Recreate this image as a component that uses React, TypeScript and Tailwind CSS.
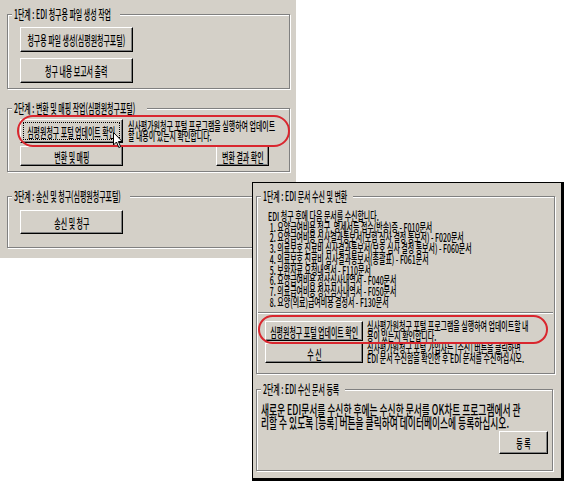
import React from 'react';

const FACE = "font-['Noto_Sans_CJK_KR','Noto_Sans',sans-serif] font-medium";

// text in the original is a narrow bitmap face, so we squeeze it horizontally
function Line({ children, className = '' }: { children: React.ReactNode; className?: string }) {
  return <span className={`block w-max origin-left scale-x-[0.58] whitespace-nowrap ${className}`}>{children}</span>;
}

function Btn({
  children,
  className = '',
  focus = false,
}: {
  children: React.ReactNode;
  className?: string;
  focus?: boolean;
}) {
  return (
    <div
      className={`relative flex shrink-0 items-center justify-center border border-t-white border-l-white border-r-black border-b-black bg-[#d4d0c8] shadow-[inset_-1px_-1px_0_#808080] ${className}`}
    >
      {focus && <div className="absolute inset-[2px] border border-dotted border-black" />}
      <span className="inline-block scale-x-[0.535] whitespace-nowrap text-[13px] leading-[13px]">{children}</span>
    </div>
  );
}

function Group({
  label,
  labelW,
  className = '',
  children,
}: {
  label: string;
  labelW: string;
  className?: string;
  children?: React.ReactNode;
}) {
  return (
    <div className={`relative border border-[#808080] shadow-[inset_1px_1px_0_#fff,1px_1px_0_#fff] ${className}`}>
      <span className={`absolute -top-[7px] left-[4px] h-[12px] bg-[#d4d0c8] px-[2px] ${labelW}`}>
        <Line className="-mt-[1px] scale-x-[0.535] text-[13px] leading-[13px]">{label}</Line>
      </span>
      {children}
    </div>
  );
}

const docs = [
  '1. 요양급여비용 청구, 명세서등 접수(반송)증 - F010문서',
  '2. 요양급여비용 심사결과통보서(보험 심사 결정 통보서) - F020문서',
  '3. 의료보호 진료비 심사결과통보서(보호 심사 결정 통보서) - F060문서',
  '4. 의료보호 진료비 심사결과통보서(총괄표) - F061문서',
  '5. 보완자료 요청내역서 - F110문서',
  '6. 요양급여비용 정산심사내역서 - F040문서',
  '7. 의료급여비용 정산심사내역서 - F050문서',
  '8. 요양(의료)급여비용 결정서 - F130문서',
];

export default function App() {
  return (
    <div className={`relative h-[481px] w-[564px] overflow-hidden bg-white text-black ${FACE}`}>
      {/* left window: claim steps */}
      <div className="h-[258px] w-[296px] bg-[#d4d0c8] pl-[7px] pr-[6px] pt-[14px]">
        <Group label="1단계 : EDI 청구용 파일 생성 작업" labelW="w-[108px]" className="h-[75px] pl-[12px] pt-[12px]">
          <div className="flex flex-col gap-[6px]">
            <Btn className="h-[25px] w-[113px]">청구용 파일 생성(심평원청구포털)</Btn>
            <Btn className="h-[25px] w-[113px]">청구 내용 보고서 출력</Btn>
          </div>
        </Group>

        <Group
          label="2단계 : 변환 및 매핑 작업(심평원청구포털)"
          labelW="w-[135px]"
          className="mt-[19px] h-[64px] pl-[12px] pr-[20px] pt-[10px]"
        >
          <div className="flex items-start gap-[5px]">
            <Btn focus className="h-[24px] w-[103px]">심평원청구 포털 업데이트 확인</Btn>
            <div className="pt-[2px] text-[12px] leading-[10px]">
              <Line>심사평가원청구 포털 프로그램을 실행하여 업데이트</Line>
              <Line>할 내용이 있는지 확인합니다.</Line>
            </div>
          </div>
          <div className="mt-[3px] flex justify-between">
            <Btn className="h-[20px] w-[103px]">변환 및 매핑</Btn>
            <Btn className="h-[20px] w-[53px]">변환 결과 확인</Btn>
          </div>
        </Group>

        <Group
          label="3단계 : 송신 및 청구(심평원청구포털)"
          labelW="w-[118px]"
          className="mt-[24px] h-[52px] pl-[12px] pt-[13px]"
        >
          <Btn className="h-[24px] w-[103px]">송신 및 청구</Btn>
        </Group>
      </div>

      {/* right window: receive steps, laid over the left one */}
      <div className="absolute left-[252px] top-[182px] h-[299px] w-[312px] border-t border-l border-r-[3px] border-b-[3px] border-black bg-[#d4d0c8] pl-[3px] pr-[3px] pt-[13px]">
        <Group label="1단계 : EDI 문서 수신 및 변환" labelW="w-[92px]" className="h-[178px] w-[299px] pt-[14px]">
          <div className="pl-[11px] text-[12px] leading-[10.7px]">
            <Line>EDI 청구 후에 다음 문서를 수신합니다.</Line>
            {docs.map((d) => (
              <Line key={d} className="pl-[3px]">
                {d}
              </Line>
            ))}
          </div>
          <div className="mx-[1px] mt-[5px] h-[2px] border-t border-b border-t-[#808080] border-b-white" />
          <div className="flex flex-col gap-[2px] pl-[8px] pt-[7px]">
            <div className="flex items-start gap-[4px]">
              <Btn className="h-[20px] w-[98px]">심평원청구 포털 업데이트 확인</Btn>
              <div className="text-[12px] leading-[10px]">
                <Line>심사평가원청구 포털 프로그램을 실행하여 업데이트할 내</Line>
                <Line>용이 있는지 확인합니다.</Line>
              </div>
            </div>
            <div className="flex items-start gap-[4px]">
              <Btn className="h-[20px] w-[98px]">수 신</Btn>
              <div className="text-[12px] leading-[10px]">
                <Line>심사평가원청구 포털 가입자는 [수신] 버튼을 클릭하면</Line>
                <Line>EDI 문서 수신함을 확인한 후 EDI 문서를 수신하십시오.</Line>
              </div>
            </div>
          </div>
        </Group>

        <Group label="2단계 : EDI 수신 문서 등록" labelW="w-[84px]" className="mt-[15px] h-[82px] w-[297px] pl-[4px] pr-[4px] pt-[13px]">
          <div className="text-[14px] leading-[13px]">
            <Line className="scale-x-[0.625]">새로운 EDI문서를 수신한 후에는 수신한 문서를 OK차트 프로그램에서 관</Line>
            <Line className="scale-x-[0.625]">리할 수 있도록 [등록] 버튼을 클릭하여 데이터베이스에 등록하십시오.</Line>
          </div>
          <div className="mt-[2px] flex justify-end">
            <Btn className="h-[23px] w-[49px]">등 록</Btn>
          </div>
        </Group>
      </div>

      {/* red highlight marks */}
      <div className="absolute left-[17px] top-[115px] h-[32px] w-[273px] rounded-[16px] border-2 border-[#d9262e]" />
      <div className="absolute left-[258px] top-[315px] h-[29px] w-[290px] rounded-[15px] border-2 border-[#d9262e]" />

      {/* mouse pointer */}
      <svg className="absolute left-[113px] top-[132px]" width="10" height="17" viewBox="0 0 10 17">
        <path d="M0.5 0.5 L0.5 13 L3.5 10 L5.8 15.5 L7.6 14.7 L5.4 9.5 L9.2 9.5 Z" fill="#fff" stroke="#000" strokeWidth="1" />
      </svg>
    </div>
  );
}
